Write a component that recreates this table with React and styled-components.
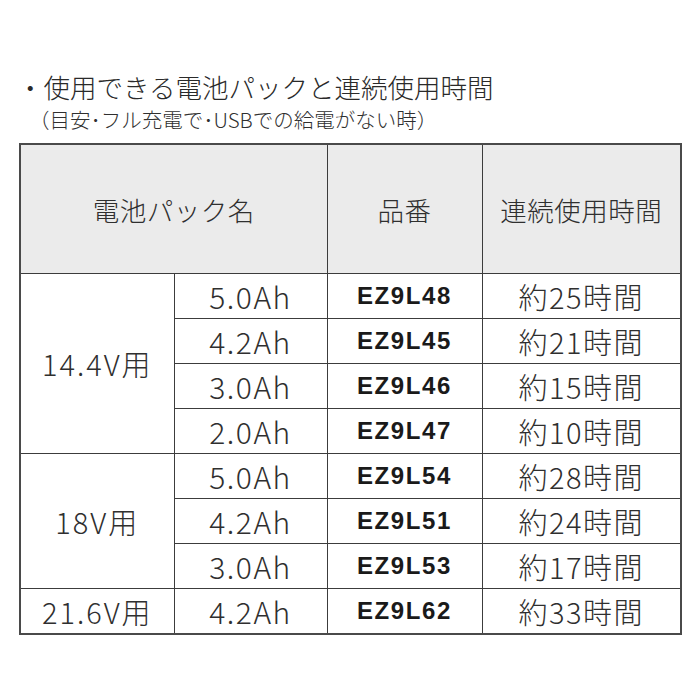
import React from "react";
import styled, { createGlobalStyle } from "styled-components";

const Global = createGlobalStyle`
  html, body { margin: 0; padding: 0; background: #fff; }
  body { font-family: "Noto Sans CJK JP", "Noto Sans", sans-serif; color: #2f2f2f; }
`;

const Page = styled.div`
  width: 700px;
  height: 700px;
  box-sizing: border-box;
  padding: 70px 20px 0 19px;
`;

const Title = styled.h1`
  margin: 0 0 0 -2px;
  font-size: 26.5px;
  font-weight: 300;
  line-height: 34px;
  color: #2a2a2a;
  white-space: nowrap;
`;

const Subtitle = styled.p`
  margin: 0 0 0 10px;
  font-size: 20.5px;
  font-weight: 300;
  line-height: 30px;
  color: #2f2f2f;
  white-space: nowrap;
`;

const Table = styled.table`
  margin-top: 9px;
  width: 661px;
  border-collapse: collapse;
  border: 2px solid #4a4a4a;
  table-layout: fixed;
`;

const Head = styled.th`
  height: 128px;
  background: #ebebeb;
  border: 1px solid #3c3c3c;
  font-weight: 300;
  font-size: 26.5px;
  letter-spacing: 0.5px;
  color: #2f2f2f;
  text-align: center;
  vertical-align: middle;
  padding: 0;
`;

const Cell = styled.td`
  height: 44px;
  border: 1px solid #3c3c3c;
  text-align: center;
  vertical-align: middle;
  padding: 0;
  font-size: ${(p) => (p.$group ? "29px" : "30px")};
  font-weight: 300;
  letter-spacing: ${(p) => (p.$group ? "2px" : "1.5px")};
  line-height: 1;
  color: #2f2f2f;
  white-space: nowrap;
`;

const Time = styled(Cell)`
  font-size: 29px;
  letter-spacing: 1.5px;
`;

const Code = styled(Cell)`
  font-family: "Liberation Sans", Arial, sans-serif;
  font-weight: 700;
  font-size: 24px;
  letter-spacing: 1.6px;
  color: #1a1a1a;
`;

const groups = [
  {
    name: "14.4V用",
    rows: [
      ["5.0Ah", "EZ9L48", "約25時間"],
      ["4.2Ah", "EZ9L45", "約21時間"],
      ["3.0Ah", "EZ9L46", "約15時間"],
      ["2.0Ah", "EZ9L47", "約10時間"],
    ],
  },
  {
    name: "18V用",
    rows: [
      ["5.0Ah", "EZ9L54", "約28時間"],
      ["4.2Ah", "EZ9L51", "約24時間"],
      ["3.0Ah", "EZ9L53", "約17時間"],
    ],
  },
  {
    name: "21.6V用",
    rows: [["4.2Ah", "EZ9L62", "約33時間"]],
  },
];

export default function App() {
  return (
    <Page>
      <Global />
      <Title>・使用できる電池パックと連続使用時間</Title>
      <Subtitle>（目安･フル充電で･USBでの給電がない時）</Subtitle>
      <Table>
        <colgroup>
          <col style={{ width: "154px" }} />
          <col style={{ width: "153px" }} />
          <col style={{ width: "155px" }} />
          <col style={{ width: "199px" }} />
        </colgroup>
        <thead>
          <tr>
            <Head colSpan={2}>電池パック名</Head>
            <Head>品番</Head>
            <Head>連続使用時間</Head>
          </tr>
        </thead>
        <tbody>
          {groups.map((g) =>
            g.rows.map((r, i) => (
              <tr key={r[1]}>
                {i === 0 && (
                  <Cell $group rowSpan={g.rows.length}>
                    {g.name}
                  </Cell>
                )}
                <Cell>{r[0]}</Cell>
                <Code>{r[1]}</Code>
                <Time>{r[2]}</Time>
              </tr>
            ))
          )}
        </tbody>
      </Table>
    </Page>
  );
}
